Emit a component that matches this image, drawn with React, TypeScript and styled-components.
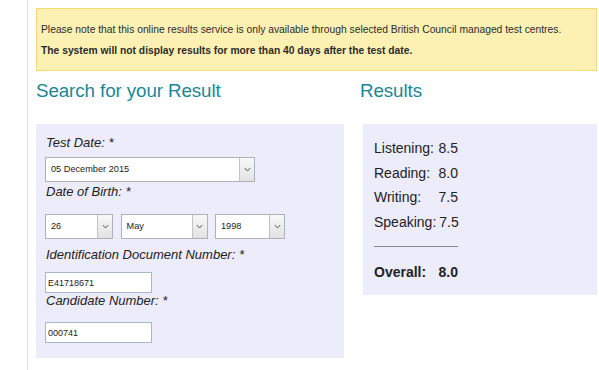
import React from 'react';
import styled, { createGlobalStyle } from 'styled-components';

const GlobalStyle = createGlobalStyle`
  html, body {
    margin: 0;
    padding: 0;
    background: #fff;
  }
  body {
    font-family: "Liberation Sans", Arial, sans-serif;
    color: #222;
  }
`;

const Page = styled.div`
  padding-left: 27px;
`;

const Content = styled.div`
  border-left: 1px solid #dcdcdc;
  min-height: 370px;
  box-sizing: border-box;
  padding: 8px 0 0 8px;
  width: 570px;
`;

const Notice = styled.div`
  width: 561px;
  box-sizing: border-box;
  background: #fcf1b3;
  border: 1px solid #f3dc74;
  padding: 10px 4px 9px;
  font-size: 10.3px;
  line-height: 21px;
  color: #2b2b2b;
  p {
    margin: 0;
  }
  strong {
    font-weight: bold;
  }
`;

const Columns = styled.div`
  display: flex;
  width: 561px;
  margin-top: 9px;
`;

const LeftCol = styled.div`
  width: 308px;
`;

const RightCol = styled.div`
  flex: 1;
  margin-left: 16px;
`;

const Heading = styled.h2`
  margin: 0 0 22px;
  font-weight: normal;
  font-size: 18.8px;
  line-height: 22px;
  letter-spacing: -0.1px;
  color: #1a8797;
`;

const FormPanel = styled.div`
  background: #ececfb;
  padding: 11px 10px 15px 9px;
`;

const Field = styled.div<{ $top: number }>`
  margin-top: ${p => p.$top}px;
`;

const Label = styled.div<{ $gap: number }>`
  font-size: 13px;
  font-style: italic;
  line-height: 16px;
  margin-bottom: ${p => p.$gap}px;
  padding-left: 1px;
`;

const SelectRow = styled.div`
  display: flex;
  gap: 7.5px;
`;

const SelectBox = styled.div<{ $w: number }>`
  display: flex;
  width: ${p => p.$w}px;
  height: 25px;
  box-sizing: border-box;
  border: 1px solid #aeb2b8;
  background: #fff;
`;

const SelectText = styled.span`
  flex: 1;
  font-size: 9.2px;
  line-height: 23px;
  padding-left: 5px;
`;

const Arrow = styled.span`
  width: 14px;
  border-left: 1px solid #c2c2c2;
  background: linear-gradient(#f8f8f8, #e2e2e2);
  display: flex;
  align-items: center;
  justify-content: center;
`;

const TextInput = styled.input`
  display: block;
  width: 107px;
  height: 21px;
  box-sizing: border-box;
  border: 1px solid #a9b6c7;
  background: #fff;
  padding: 0 2px;
  margin: 0;
  font-family: "Liberation Sans", Arial, sans-serif;
  font-size: 9px;
  color: #222;
  outline: none;
`;

const ResultsPanel = styled.div`
  margin-left: 3px;
  background: #ececfb;
  padding: 12px 0 11px 11px;
`;

const ScoreRow = styled.div<{ $bold?: boolean }>`
  display: flex;
  justify-content: space-between;
  gap: 3px;
  width: 84px;
  font-size: 14px;
  line-height: 24.5px;
  font-weight: ${p => (p.$bold ? 'bold' : 'normal')};
`;

const Divider = styled.div`
  width: 84px;
  height: 1px;
  background: #8a8a8a;
  margin: 12px 0 12.5px;
`;

const Chevron = () => (
  <svg width="7" height="5" viewBox="0 0 7 5">
    <path d="M0.8 1 L3.5 4 L6.2 1" stroke="#5a5a5a" strokeWidth="1" fill="none" />
  </svg>
);

const Select = ({ value, width }: { value: string; width: number }) => (
  <SelectBox $w={width}>
    <SelectText>{value}</SelectText>
    <Arrow>
      <Chevron />
    </Arrow>
  </SelectBox>
);

const scores = [
  ['Listening:', '8.5'],
  ['Reading:', '8.0'],
  ['Writing:', '7.5'],
  ['Speaking:', '7.5'],
];

const App = () => {
  return (
    <>
      <GlobalStyle />
      <Page>
        <Content>
          <Notice>
            <p>Please note that this online results service is only available through selected British Council managed test centres.</p>
            <p><strong>The system will not display results for more than 40 days after the test date.</strong></p>
          </Notice>
          <Columns>
            <LeftCol>
              <Heading>Search for your Result</Heading>
              <FormPanel>
                <Field $top={0}>
                  <Label $gap={6}>Test Date: *</Label>
                  <Select value="05 December 2015" width={210} />
                </Field>
                <Field $top={2}>
                  <Label $gap={14}>Date of Birth: *</Label>
                  <SelectRow>
                    <Select value="26" width={68} />
                    <Select value="May" width={87} />
                    <Select value="1998" width={70} />
                  </SelectRow>
                </Field>
                <Field $top={8}>
                  <Label $gap={9}>Identification Document Number: *</Label>
                  <TextInput readOnly value="E41718671" />
                </Field>
                <Field $top={0}>
                  <Label $gap={13}>Candidate Number: *</Label>
                  <TextInput readOnly value="000741" />
                </Field>
              </FormPanel>
            </LeftCol>
            <RightCol>
              <Heading>Results</Heading>
              <ResultsPanel>
                {scores.map(([label, score]) => (
                  <ScoreRow key={label}>
                    <span>{label}</span>
                    <span>{score}</span>
                  </ScoreRow>
                ))}
                <Divider />
                <ScoreRow $bold>
                  <span>Overall:</span>
                  <span>8.0</span>
                </ScoreRow>
              </ResultsPanel>
            </RightCol>
          </Columns>
        </Content>
      </Page>
    </>
  );
};

export default App;
